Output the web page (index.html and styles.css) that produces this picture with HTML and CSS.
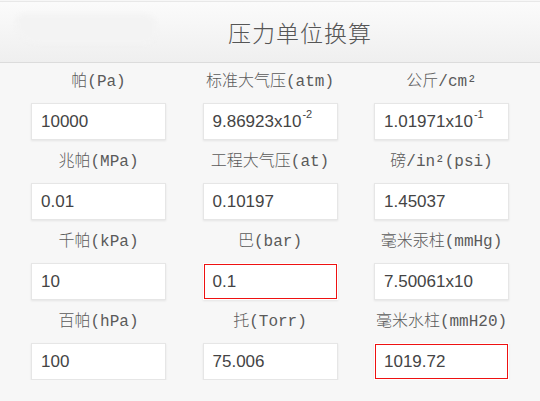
FILE: index.html
```html
<!DOCTYPE html>
<html lang="zh-CN">
<head>
    <meta charset="UTF-8">
    <meta name="viewport" content="width=device-width, initial-scale=1.0">
    <title>压力单位换算</title>
    <link rel="stylesheet" href="styles.css">
</head>
<body>
    <div class="header">
        <div class="glare"></div>
        <h1>压力单位换算</h1>
    </div>

    <div class="grid">
        <div class="cell">
            <div class="label">帕(Pa)</div>
            <div class="box">10000</div>
        </div>
        <div class="cell">
            <div class="label">标准大气压(atm)</div>
            <div class="box">9.86923x10<sup>-2</sup></div>
        </div>
        <div class="cell">
            <div class="label">公斤/cm²</div>
            <div class="box">1.01971x10<sup>-1</sup></div>
        </div>

        <div class="cell">
            <div class="label">兆帕(MPa)</div>
            <div class="box">0.01</div>
        </div>
        <div class="cell">
            <div class="label">工程大气压(at)</div>
            <div class="box">0.10197</div>
        </div>
        <div class="cell">
            <div class="label">磅/in²(psi)</div>
            <div class="box">1.45037</div>
        </div>

        <div class="cell">
            <div class="label">千帕(kPa)</div>
            <div class="box">10</div>
        </div>
        <div class="cell">
            <div class="label">巴(bar)</div>
            <div class="box error">0.1</div>
        </div>
        <div class="cell">
            <div class="label">毫米汞柱(mmHg)</div>
            <div class="box">7.50061x10</div>
        </div>

        <div class="cell">
            <div class="label">百帕(hPa)</div>
            <div class="box">100</div>
        </div>
        <div class="cell">
            <div class="label">托(Torr)</div>
            <div class="box">75.006</div>
        </div>
        <div class="cell">
            <div class="label">毫米水柱(mmH20)</div>
            <div class="box error">1019.72</div>
        </div>
    </div>
</body>
</html>
```

FILE: styles.css
```css
body {
    margin: 0;
    background: #f7f7f7;
    font-family: "Liberation Mono", "Noto Sans CJK SC", monospace;
    color: #444;
}

.header {
    position: relative;
    height: 60px;
    border-top: 1px solid #e8e8e8;
    margin-top: 1px;
    border-bottom: 1px solid #dcdcdc;
    background: linear-gradient(#fbfbfb, #efefef);
    display: flex;
    align-items: center;
    justify-content: center;
}

.glare {
    position: absolute;
    left: 16px;
    top: 12px;
    width: 140px;
    height: 30px;
    border-radius: 10px 14px 14px 30px;
    background: #f3f3f3;
    filter: blur(2px);
}

.header h1 {
    position: relative;
    margin: 0 0 0 60px;
    font-family: "Noto Sans CJK SC", sans-serif;
    font-weight: 300;
    font-size: 23px;
    letter-spacing: 1px;
    color: #555;
}

.grid {
    display: grid;
    grid-template-columns: repeat(3, 135px);
    column-gap: 36.5px;
    row-gap: 12px;
    justify-content: center;
    padding-top: 9px;
}

.label {
    height: 20px;
    line-height: 20px;
    margin-bottom: 11px;
    text-align: center;
    font-size: 16px;
    font-weight: 300;
    color: #5a5a5a;
    white-space: nowrap;
}

.box {
    box-sizing: border-box;
    height: 37px;
    padding: 0 9px;
    line-height: 36px;
    background: white;
    border: 1px solid #e6e6e6;
    box-shadow: 0 1px 2px rgba(0,0,0,0.08);
    font-family: "Liberation Sans", Arial, sans-serif;
    font-size: 17px;
    color: #444;
}

.box sup {
    font-size: 11px;
    vertical-align: 9px;
    line-height: 0;
    margin-left: 1px;
}

.box.error {
    border-color: transparent;
    box-shadow: inset 0 0 0 1px #e11, 0 1px 2px rgba(0,0,0,0.08);
}
```
